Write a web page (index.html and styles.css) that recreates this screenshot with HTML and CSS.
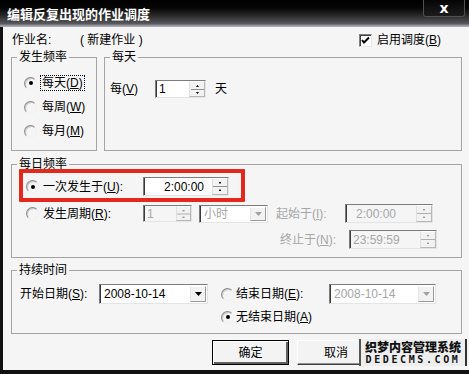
FILE: index.html
```html
<!DOCTYPE html>
<html lang="zh">
<head>
<meta charset="utf-8">
<title>编辑反复出现的作业调度</title>
<link rel="stylesheet" href="styles.css">
</head>
<body>
<div class="window">
  <div class="titlebar">
    <span class="title">编辑反复出现的作业调度</span>
    <span class="close">x</span>
  </div>
  <div class="content">
    <div class="row-name">
      <span class="lbl-name">作业名:</span>
      <span class="job">( 新建作业 )</span>
      <span class="enable"><span class="checkbox"><svg width="9" height="9" viewBox="0 0 9 9"><path d="M1 4 L3 6.5 L8 1.5" fill="none" stroke="#000" stroke-width="2"/></svg></span><span>启用调度(<u>B</u>)</span></span>
    </div>

    <div class="groups-top">
      <fieldset class="grp grp-freq">
        <legend>发生频率</legend>
        <div class="gbody freq-body">
          <div class="radio-row"><span class="radio on"></span><span class="focus">每天(<u>D</u>)</span></div>
          <div class="radio-row"><span class="radio"></span><span class="rtext">每周(<u>W</u>)</span></div>
          <div class="radio-row"><span class="radio"></span><span class="rtext">每月(<u>M</u>)</span></div>
        </div>
      </fieldset>
      <fieldset class="grp grp-day">
        <legend>每天</legend>
        <div class="gbody day-body">
          <div class="day-row">
            <span class="lbl-every">每(<u>V</u>)</span>
            <span class="spin spin-day"><span class="field">1</span><span class="spinbtn"><svg width="13" height="15" viewBox="0 0 13 15"><path d="M5.5 4.5 L6.5 3.5 L7.5 4.5Z M5.5 10.5 L6.5 11.5 L7.5 10.5Z" fill="#000" stroke="#000" stroke-width="0.8"/><line x1="0" y1="7.5" x2="13" y2="7.5" stroke="#909090"/></svg></span></span>
            <span class="unit">天</span>
          </div>
        </div>
      </fieldset>
    </div>

    <fieldset class="grp grp-daily">
      <legend>每日频率</legend>
      <div class="gbody daily-body">
        <div class="drow drow1">
          <span class="radio on"></span>
          <span class="dlabel">一次发生于(<u>U</u>):</span>
          <span class="spin spin-time"><span class="field time">2:00:00</span><span class="spinbtn"><svg width="14" height="17" viewBox="0 0 14 17"><path d="M6 5 L7 4 L8 5Z M6 12 L7 13 L8 12Z" fill="#000" stroke="#000" stroke-width="0.8"/><line x1="0" y1="8.5" x2="14" y2="8.5" stroke="#909090"/></svg></span></span>
          <span class="highlight"></span>
        </div>
        <div class="drow drow2">
          <span class="radio"></span>
          <span class="dlabel">发生周期(<u>R</u>):</span>
          <span class="spin spin-num disabled"><span class="field">1</span><span class="spinbtn"><svg width="13" height="14" viewBox="0 0 13 14"><path d="M5.5 4 L6.5 3 L7.5 4Z M5.5 10 L6.5 11 L7.5 10Z" fill="#999" stroke="#999" stroke-width="0.8"/><line x1="0" y1="7" x2="13" y2="7" stroke="#b0b0b0"/></svg></span></span>
          <span class="select sel-unit disabled"><span class="field">小时</span><span class="dropbtn"><svg width="7" height="4" viewBox="0 0 7 4"><path d="M0 0 H7 L3.5 4Z" fill="#a0a0a0"/></svg></span></span>
          <span class="tlabel gray">起始于(<u>I</u>):</span>
          <span class="spin spin-range disabled"><span class="field center">2:00:00</span><span class="spinbtn"><svg width="14" height="17" viewBox="0 0 14 17"><path d="M6 5 L7 4 L8 5Z M6 12 L7 13 L8 12Z" fill="#999" stroke="#999" stroke-width="0.8"/><line x1="0" y1="8.5" x2="14" y2="8.5" stroke="#b0b0b0"/></svg></span></span>
        </div>
        <div class="drow drow3">
          <span class="tlabel gray">终止于(<u>N</u>):</span>
          <span class="spin spin-range disabled"><span class="field">23:59:59</span><span class="spinbtn"><svg width="14" height="17" viewBox="0 0 14 17"><path d="M6 5 L7 4 L8 5Z M6 12 L7 13 L8 12Z" fill="#999" stroke="#999" stroke-width="0.8"/><line x1="0" y1="8.5" x2="14" y2="8.5" stroke="#b0b0b0"/></svg></span></span>
        </div>
      </div>
    </fieldset>

    <fieldset class="grp grp-dur">
      <legend>持续时间</legend>
      <div class="gbody dur-body">
        <div class="durrow1">
          <span class="lbl-start">开始日期(<u>S</u>):</span>
          <span class="select sel-start"><span class="field">2008-10-14</span><span class="dropbtn"><svg width="7" height="4" viewBox="0 0 7 4"><path d="M0 0 H7 L3.5 4Z" fill="#000"/></svg></span></span>
          <span class="radio r-end"></span>
          <span class="lbl-end">结束日期(<u>E</u>):</span>
          <span class="select sel-end disabled"><span class="field">2008-10-14</span><span class="dropbtn"><svg width="7" height="4" viewBox="0 0 7 4"><path d="M0 0 H7 L3.5 4Z" fill="#a0a0a0"/></svg></span></span>
        </div>
        <div class="durrow2">
          <span class="radio on"></span>
          <span class="lbl-noend">无结束日期(<u>A</u>)</span>
        </div>
      </div>
    </fieldset>

    <div class="buttons">
      <span class="btn btn-default">确定</span>
      <span class="btn">取消</span>
    </div>
  </div>

  <div class="watermark">
    <span class="wm1">织梦内容管理系统</span>
    <span class="wm2">DEDECMS.COM</span>
  </div>
</div>
</body>
</html>
```
FILE: styles.css
```css
* { box-sizing: border-box; }
html, body { margin: 0; padding: 0; }
body {
  width: 469px;
  height: 374px;
  overflow: hidden;
  background: #f5f5f5;
  font-family: "Liberation Sans", "Noto Sans CJK SC", sans-serif;
  font-size: 12px;
  line-height: 14px;
  color: #000;
}
u { text-decoration: underline; text-underline-offset: 1px; }

.window {
  position: relative;
  width: 469px;
  height: 374px;
  display: flex;
  flex-direction: column;
}

/* title bar */
.titlebar {
  flex: none;
  height: 27px;
  display: flex;
  justify-content: space-between;
  align-items: flex-start;
  background: linear-gradient(#000 0px, #060606 8px, #262626 15px, #4e4e4e 22px, #5c5c62 24px, #8a8a96 25px, #b4b4bc 27px);
}
.title {
  color: #fff;
  font-family: "Noto Sans CJK SC", sans-serif;
  font-weight: bold;
  font-size: 13px;
  line-height: 16px;
  padding: 6px 0 0 7px;
}
.close {
  width: 42px;
  height: 17px;
  margin-right: 4px;
  border: 1px solid #505050;
  border-top: none;
  border-radius: 0 0 3px 3px;
  background: linear-gradient(#050505, #1c1c1c);
  color: #fff;
  font-family: "DejaVu Sans", sans-serif;
  font-weight: bold;
  font-size: 14px;
  line-height: 14px;
  display: flex;
  align-items: center;
  justify-content: center;
}

/* content */
.content {
  flex: 1;
  border-left: 3px solid #111;
  border-bottom: 4px solid #111;
  background: #f5f5f5;
  padding: 6px 7px 0 8px;
  display: flex;
  flex-direction: column;
}

.row-name {
  height: 14px;
  display: flex;
  align-items: center;
  padding-left: 1px;
}
.lbl-name { width: 68px; }
.job { width: 279px; }
.enable { display: flex; align-items: center; gap: 5px; }
.checkbox {
  width: 13px;
  height: 13px;
  background: #fff;
  border: 1px solid;
  border-color: #808080 #e8e8e8 #e8e8e8 #808080;
  box-shadow: inset 1px 1px 0 #404040;
  display: flex;
  align-items: center;
  justify-content: center;
}

/* group boxes */
.grp {
  margin: 0;
  padding: 0;
  min-width: 0;
  border: 1px solid #a4a4a4;
}
.grp legend {
  margin-left: 5px;
  padding: 0 2px;
  line-height: 16px;
  font-size: 12px;
}

.groups-top {
  display: flex;
  gap: 7px;
  margin-top: 2px;
}
.grp-freq { width: 86px; height: 102px; }
.grp-day { width: 358px; height: 102px; }

.freq-body {
  padding: 10px 0 0 12px;
  display: flex;
  flex-direction: column;
  gap: 8px;
}
.radio-row {
  height: 16px;
  display: flex;
  align-items: center;
  gap: 3px;
}
.rtext { padding-left: 2px; }
.focus {
  border: 1px dotted #000;
  padding: 0 1px;
  line-height: 14px;
}

.radio {
  flex: none;
  width: 13px;
  height: 13px;
  border-radius: 50%;
  border: 1px solid;
  border-color: #8a8a8a #f0f0f0 #f0f0f0 #8a8a8a;
  box-shadow: inset 1px 1px 0 #c8c8c8;
  background: #f5f5f5;
  display: flex;
  align-items: center;
  justify-content: center;
}
.radio.on::after {
  content: "";
  width: 4px;
  height: 4px;
  border-radius: 50%;
  background: #000;
}

.day-body { padding: 15px 0 0 5px; }
.day-row { display: flex; align-items: center; height: 18px; }
.lbl-every { width: 45px; }
.unit { margin-left: 9px; }

/* spin inputs */
.spin {
  display: flex;
  align-items: stretch;
  background: #fff;
  border: 1px solid;
  border-color: #7c7c7c #e4e4e4 #e4e4e4 #7c7c7c;
  box-shadow: inset 1px 0 0 #3a3a3a;
}
.spin .field {
  flex: 1;
  padding-left: 3px;
  display: flex;
  align-items: center;
  font-size: 12px;
}
.spin .field.time { padding-left: 20px; }
.spin .field.center { padding-left: 10px; }
.spinbtn {
  flex: none;
  display: flex;
  align-items: center;
  justify-content: center;
  background: #f2f2f2;
  border-left: 1px solid #e0e0e0;
  border-right: 1px solid #b8b8b8;
  border-top: 1px solid #fff;
  border-bottom: 1px solid #b8b8b8;
}
.spin-day { width: 51px; height: 18px; }
.spin-day .spinbtn { width: 16px; }
.spin-time { width: 86px; height: 19px; }
.spin-time .spinbtn { width: 16px; }
.spin-num { width: 49px; height: 17px; }
.spin-num .spinbtn { width: 15px; }
.spin-range { width: 88px; height: 19px; }
.spin-range .spinbtn { width: 16px; }

.disabled { background: #f5f5f5; color: #a6a6a6; }
.gray { color: #a6a6a6; }

/* select */
.select {
  display: flex;
  align-items: stretch;
  background: #fff;
  border: 1px solid;
  border-color: #7c7c7c #e4e4e4 #e4e4e4 #7c7c7c;
  box-shadow: inset 1px 0 0 #3a3a3a;
}
.select .field {
  flex: 1;
  padding-left: 4px;
  display: flex;
  align-items: center;
}
.dropbtn {
  flex: none;
  width: 16px;
  display: flex;
  align-items: center;
  justify-content: center;
  background: #f2f2f2;
  border: 1px solid;
  border-color: #fff #9a9a9a #9a9a9a #e6e6e6;
  margin: 1px 1px 1px 0;
}

/* daily group */
.grp-daily { height: 102px; margin-top: 5px; }
.daily-body {
  padding: 5px 0 0 14px;
  display: flex;
  flex-direction: column;
}
.drow { display: flex; align-items: center; height: 19px; }
.drow1 { position: relative; }
.drow2 { margin-top: 8px; }
.drow3 { margin-top: 7px; padding-left: 254px; }
.dlabel { width: 104px; padding-left: 4px; }
.sel-unit { width: 69px; height: 18px; margin-left: 7px; }
.sel-unit .dropbtn { width: 16px; }
.tlabel { width: 69px; margin-left: 8px; }
.drow3 .tlabel { margin-left: 0; }

.highlight {
  position: absolute;
  left: -7px;
  top: -8px;
  width: 226px;
  height: 33px;
  border: 4px solid #e3281c;
  border-radius: 1px;
  pointer-events: none;
}

/* duration group */
.grp-dur { height: 72px; margin-top: 4px; }
.dur-body {
  padding: 6px 0 0 8px;
  display: flex;
  flex-direction: column;
}
.durrow1 { display: flex; align-items: center; height: 20px; }
.lbl-start { width: 79px; }
.sel-start { width: 109px; height: 20px; }
.r-end { margin-left: 13px; }
.lbl-end { width: 95px; padding-left: 2px; }
.sel-end { width: 107px; height: 20px; }
.durrow2 {
  display: flex;
  align-items: center;
  height: 16px;
  margin-top: 5px;
  padding-left: 201px;
}
.lbl-noend { padding-left: 2px; }

/* buttons */
.buttons {
  display: flex;
  gap: 8px;
  margin-top: 6px;
  padding-left: 201px;
}
.btn {
  width: 78px;
  height: 25px;
  display: flex;
  align-items: center;
  justify-content: center;
  background: #f3f3f3;
  border: 1px solid;
  border-color: #fff #404040 #404040 #fff;
  box-shadow: inset -1px -1px 0 #909090;
}
.btn-default {
  width: 77px;
  border: 1px solid #000;
  box-shadow: inset 1px 1px 0 #fff, inset -2px -2px 0 #606060;
}

/* watermark overlay */
.watermark {
  position: absolute;
  left: 359px;
  top: 339px;
  width: 108px;
  height: 27px;
  background: #eeeeee;
  border-left: 2px solid #555;
  border-right: 2px solid #333;
  display: flex;
  flex-direction: column;
  align-items: center;
  justify-content: center;
  gap: 2px;
}
.wm1 {
  display: block;
  height: 12px;
  font-family: "Noto Sans CJK SC", sans-serif;
  font-weight: 900;
  font-size: 12px;
  line-height: 12px;
  color: #111;
}
.wm2 {
  display: block;
  height: 10px;
  font-family: "DejaVu Sans Mono", monospace;
  font-weight: bold;
  font-size: 10px;
  line-height: 10px;
  letter-spacing: 2.6px;
  color: #111;
}
```
